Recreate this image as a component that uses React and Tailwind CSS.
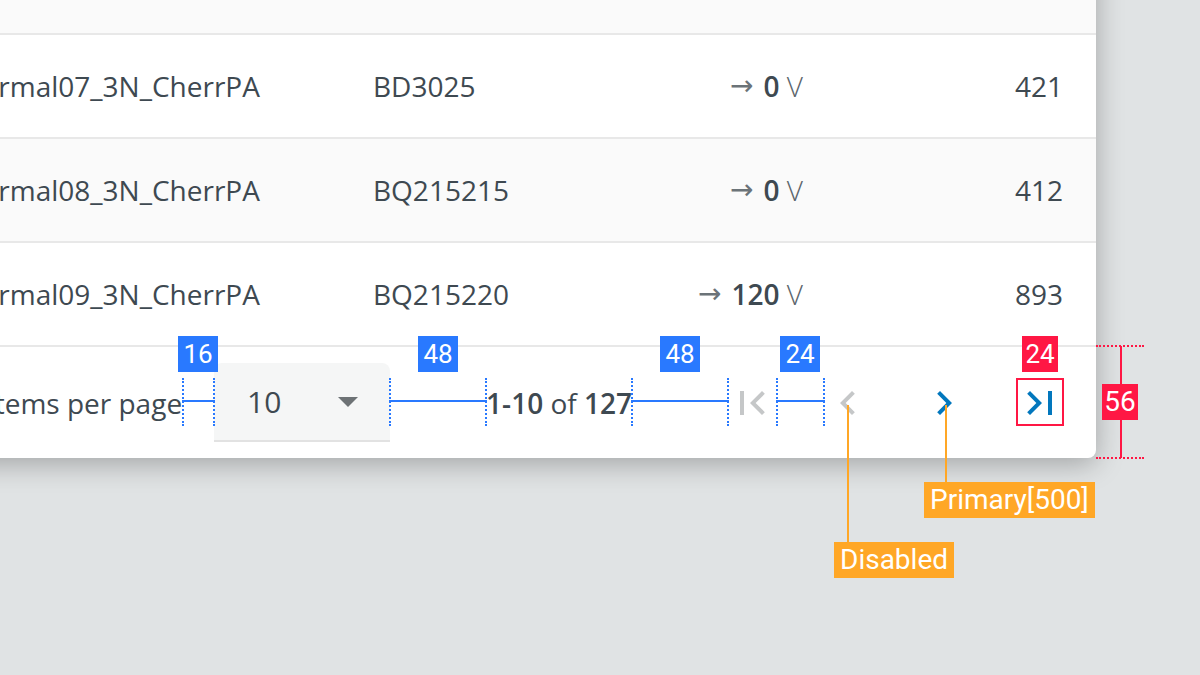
const ROWS = [
  { name: "Thermal07_3N_CherrPA", serial: "BD3025", volts: "0", count: "421" },
  { name: "Thermal08_3N_CherrPA", serial: "BQ215215", volts: "0", count: "412" },
  { name: "Thermal09_3N_CherrPA", serial: "BQ215220", volts: "120", count: "893" },
];

function Icon({ d, className }) {
  return (
    <svg viewBox="0 0 24 24" width="48" height="48" className={className}>
      <path d={d} fill="currentColor" />
    </svg>
  );
}

function Tag({ className, children }) {
  return (
    <div
      className={`absolute flex items-center justify-center leading-none text-white ${className}`}
      style={{ fontFamily: "Roboto, sans-serif" }}
    >
      {children}
    </div>
  );
}

// blue spacing marker: two dotted verticals joined by a line
function Gap({ left, width }) {
  return (
    <div className="absolute top-[378px] h-[48px]" style={{ left, width }}>
      <div className="absolute left-0 top-0 h-full border-l-2 border-dotted border-[#2979ff]" />
      <div className="absolute right-0 top-0 h-full border-l-2 border-dotted border-[#2979ff]" />
      <div className="absolute left-0 right-0 top-[22px] h-[2px] bg-[#2979ff]" />
    </div>
  );
}

export default function App() {
  return (
    <div
      className="relative h-[675px] w-[1200px] overflow-hidden bg-[#e0e3e4] text-[#3e4951]"
      style={{ fontFamily: '"Open Sans", sans-serif' }}
    >
      <div className="ml-[-82px] mt-[-70px] w-[1178px] rounded-br-lg bg-white shadow-[0_6px_28px_rgba(0,0,0,0.28)]">
        <div className="h-[105px] border-b-2 border-[#e8e8e8] bg-[#fafafa]" />

        {ROWS.map((r, i) => (
          <div
            key={r.serial}
            className={`flex h-[104px] items-center border-b-2 border-[#e8e8e8] text-[28px] ${
              i === 1 ? "bg-[#fafafa]" : "bg-white"
            }`}
          >
            <div className="w-[423px] pl-[32px] whitespace-nowrap">{r.name}</div>
            <div className="w-[246px] pl-[32px]">{r.serial}</div>
            <div className="flex w-[248px] items-center justify-end gap-[10px] pr-[32px] whitespace-nowrap">
              <span className="text-[28px] text-[#6b7378]" style={{ fontFamily: '"DejaVu Sans", sans-serif' }}>
                →
              </span>
              <span>
                <span className="font-semibold">{r.volts}</span>{" "}
                <span className="font-light text-[#5b656c]">V</span>
              </span>
            </div>
            <div className="w-[261px] pr-[33px] text-right">{r.count}</div>
          </div>
        ))}

        <div className="flex h-[111px] items-center justify-end pr-[32px] text-[28px]">
          <span className="whitespace-nowrap">Items per page</span>
          <div className="ml-[32px] flex h-[79px] w-[176px] items-center justify-between rounded-t-lg border-b-2 border-[#e2e2e2] bg-[#f5f6f6] pl-[33px] pr-[32px]">
            <span className="text-[30px]">10</span>
            <svg width="20" height="10" viewBox="0 0 20 10">
              <path d="M0 0h20L10 10z" fill="#6d7275" />
            </svg>
          </div>
          <div className="ml-[96px] whitespace-nowrap">
            <span className="font-semibold">1-10</span> of <span className="font-semibold">127</span>
          </div>
          <div className="ml-[96px] flex gap-[48px]">
            <Icon className="text-[#c5c7c8]" d="M18.41 16.59L13.82 12l4.59-4.59L17 6l-6 6 6 6zM6 6h2v12H6z" />
            <Icon className="text-[#c5c7c8]" d="M15.41 7.41L14 6l-6 6 6 6 1.41-1.41L10.83 12z" />
            <Icon className="text-[#0277bd]" d="M10 6L8.59 7.41 13.17 12l-4.58 4.59L10 18l6-6z" />
            <Icon className="text-[#0277bd]" d="M5.59 7.41L10.18 12l-4.59 4.59L7 18l6-6-6-6zM16 6h2v12h-2z" />
          </div>
        </div>
      </div>

      {/* spec annotations */}
      <Gap left={182} width={33} />
      <Gap left={389} width={98} />
      <Gap left={631} width={98} />
      <Gap left={776} width={49} />

      <Tag className="left-[178px] top-[336px] h-[36px] w-[40px] bg-[#2979ff] text-[26px]">16</Tag>
      <Tag className="left-[418px] top-[336px] h-[36px] w-[40px] bg-[#2979ff] text-[26px]">48</Tag>
      <Tag className="left-[660px] top-[336px] h-[36px] w-[40px] bg-[#2979ff] text-[26px]">48</Tag>
      <Tag className="left-[780px] top-[336px] h-[36px] w-[40px] bg-[#2979ff] text-[26px]">24</Tag>

      <div className="absolute left-[1016px] top-[378px] h-[48px] w-[48px] border-2 border-[#ff1744]" />
      <Tag className="left-[1022px] top-[336px] h-[36px] w-[36px] bg-[#ff1744] text-[26px]">24</Tag>
      <div className="absolute left-[1096px] top-[345px] w-[48px] border-t-2 border-dotted border-[#ff1744]" />
      <div className="absolute left-[1096px] top-[457px] w-[48px] border-t-2 border-dotted border-[#ff1744]" />
      <div className="absolute left-[1120px] top-[346px] h-[112px] w-[2px] bg-[#ff1744]" />
      <Tag className="left-[1102px] top-[384px] h-[36px] w-[36px] bg-[#ff1744] text-[28px]">56</Tag>

      <div className="absolute left-[847px] top-[405px] h-[140px] w-[2px] bg-[#ffa726]" />
      <div className="absolute left-[945px] top-[405px] h-[80px] w-[2px] bg-[#ffa726]" />
      <Tag className="left-[924px] top-[482px] h-[36px] px-[6px] bg-[#ffa726] text-[28px]">Primary[500]</Tag>
      <Tag className="left-[834px] top-[542px] h-[36px] px-[6px] bg-[#ffa726] text-[28px]">Disabled</Tag>
    </div>
  );
}
